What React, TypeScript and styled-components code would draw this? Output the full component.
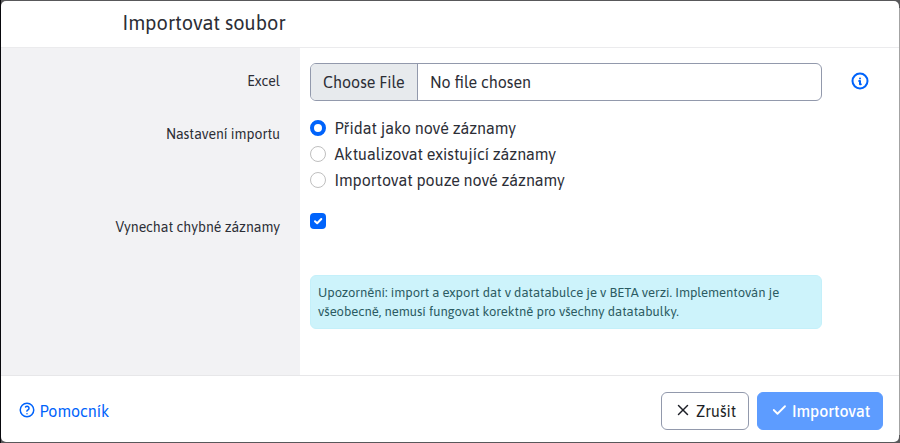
import React from "react";
import styled, { createGlobalStyle } from "styled-components";
import { TbInfoCircle, TbHelp, TbX, TbCheck } from "react-icons/tb";

const GlobalStyle = createGlobalStyle`
  * { box-sizing: border-box; }
  body {
    margin: 0;
    background: #4b4b4d;
    font-family: Asap, "Noto Sans", sans-serif;
    font-size: 16px;
    color: #2c2e36;
  }
`;

const Backdrop = styled.div`
  height: 443px;
  padding: 1px;
  overflow: hidden;
  background: linear-gradient(90deg, #08080c 0, #08080c 1px, transparent 1px),
    linear-gradient(90deg, #141017 0, #2e2c30 60px, #555557 90px, #606062 899px, #a3a3a3 899px) 0 8px / 100% 427px no-repeat,
    #58585a;
`;

const Dialog = styled.section`
  display: flex;
  flex-direction: column;
  width: 898px;
  height: 441px;
  border-radius: 5px;
  background: #fff;
  overflow: hidden;
`;

const Header = styled.header`
  height: 47px;
  flex: none;
  padding: 7px 0 0 121.5px;
  border-bottom: 1px solid #ebebed;
`;

const Text = styled.span<{ $size?: number; $weight?: number }>`
  font-size: ${(p) => p.$size ?? 16}px;
  font-weight: ${(p) => p.$weight ?? 400};
  white-space: nowrap;
`;

const Title = styled.h1`
  margin: 0;
  font-size: 20px;
  font-weight: 400;
  line-height: 30px;
`;

const Body = styled.div`
  flex: none;
  height: 327px;
  padding-top: 15px;
  background: linear-gradient(90deg, #f2f2f4 299px, #fff 299px);
`;

const Row = styled.div<{ $height: number }>`
  display: grid;
  grid-template-columns: 279px 512px 1fr;
  column-gap: 30px;
  height: ${(p) => p.$height}px;
`;

const Label = styled.label<{ $top: number }>`
  padding-top: ${(p) => p.$top}px;
  font-size: 14px;
  line-height: 21px;
  text-align: right;
`;

const FileInput = styled.div`
  display: flex;
  height: 38px;
  border: 1px solid #9299ac;
  border-radius: 6px;
  overflow: hidden;
  line-height: 37px;
`;

const FileButton = styled.span`
  width: 107px;
  padding-left: 12px;
  background: #e7eaed;
  border-right: 1px solid #9299ac;
`;

const FileName = styled.span`
  padding-left: 12px;
`;

const InfoCell = styled.div`
  padding-top: 8px;
  margin-left: -2px;
  line-height: 0;
  color: #0063fb;
`;

const Options = styled.div`
  display: flex;
  flex-direction: column;
  margin-top: -1px;
`;

const Option = styled.label`
  display: flex;
  align-items: center;
  gap: 8.5px;
  height: 26px;
`;

const Radio = styled.input`
  appearance: none;
  width: 16px;
  height: 16px;
  margin: 0;
  border: 1px solid #bfbfbf;
  border-radius: 50%;
  background: #fff;
  &:checked {
    border: 4px solid #0063fb;
  }
`;

const Checkbox = styled.span`
  display: flex;
  width: 16px;
  height: 16px;
  margin-top: 5px;
  border-radius: 4px;
  background: #0063fb;
`;

const Alert = styled.div`
  grid-column: 2;
  display: flex;
  flex-direction: column;
  height: 54px;
  padding: 7px;
  border: 1px solid #c4f0fa;
  border-radius: 6px;
  background: #cdf3fb;
  color: #2b5b62;
  font-size: 13px;
  line-height: 19px;
`;

const Footer = styled.footer`
  display: flex;
  flex: 1;
  align-items: flex-start;
  gap: 8px;
  padding: 16px 16px 0 17px;
  border-top: 1px solid #e7e7e9;
`;

const HelpLink = styled.a`
  display: flex;
  align-items: center;
  gap: 3.5px;
  height: 38px;
  margin-right: auto;
  color: #0063fb;
  svg { margin-bottom: 3px; }
`;

const Button = styled.button<{ $primary?: boolean }>`
  display: flex;
  align-items: center;
  gap: 4px;
  width: ${(p) => (p.$primary ? 126 : 88)}px;
  height: 38px;
  padding: 0 0 0 12px;
  border: 1px solid ${(p) => (p.$primary ? "#5d9cff" : "#9299ac")};
  border-radius: 6px;
  background: ${(p) => (p.$primary ? "#5d9cff" : "#fff")};
  color: ${(p) => (p.$primary ? "#fff" : "#1d1f26")};
  font-family: inherit;
  svg { flex: none; margin-bottom: 3px; }
`;

const options = [
  "Přidat jako nové záznamy",
  "Aktualizovat existující záznamy",
  "Importovat pouze nové záznamy",
];

export default function App() {
  return (
    <>
      <GlobalStyle />
      <Backdrop>
        <Dialog>
          <Header>
            <Title><Text $size={20}>Importovat soubor</Text></Title>
          </Header>
          <Body>
            <Row $height={53}>
              <Label $top={8}><Text $size={14}>Excel</Text></Label>
              <FileInput>
                <FileButton><Text>Choose File</Text></FileButton>
                <FileName><Text>No file chosen</Text></FileName>
              </FileInput>
              <InfoCell><TbInfoCircle size={20} strokeWidth={2.4} /></InfoCell>
            </Row>
            <Row $height={92}>
              <Label $top={8}><Text $size={14}>Nastavení importu</Text></Label>
              <Options>
                {options.map((label, i) => (
                  <Option key={label}>
                    <Radio type="radio" name="mode" defaultChecked={i === 0} />
                    <Text>{label}</Text>
                  </Option>
                ))}
              </Options>
            </Row>
            <Row $height={67}>
              <Label $top={9}><Text $size={14}>Vynechat chybné záznamy</Text></Label>
              <Checkbox role="checkbox" aria-checked="true">
                <svg width="16" height="16" viewBox="0 0 16 16" fill="none" stroke="#fff" strokeWidth="2" strokeLinecap="round" strokeLinejoin="round">
                  <path d="M5 8.2 7.2 10.3 11.3 6" />
                </svg>
              </Checkbox>
            </Row>
            <Row $height={54}>
              <Alert>
                <Text $size={13}>Upozornění: import a export dat v datatabulce je v BETA verzi. Implementován je</Text>
                <Text $size={13}>všeobecně, nemusí fungovat korektně pro všechny datatabulky.</Text>
              </Alert>
            </Row>
          </Body>
          <Footer>
            <HelpLink><TbHelp size={18} /><Text>Pomocník</Text></HelpLink>
            <Button><TbX size={18} /><Text>Zrušit</Text></Button>
            <Button $primary><TbCheck size={18} strokeWidth={2.4} /><Text $weight={500}>Importovat</Text></Button>
          </Footer>
        </Dialog>
      </Backdrop>
    </>
  );
}
